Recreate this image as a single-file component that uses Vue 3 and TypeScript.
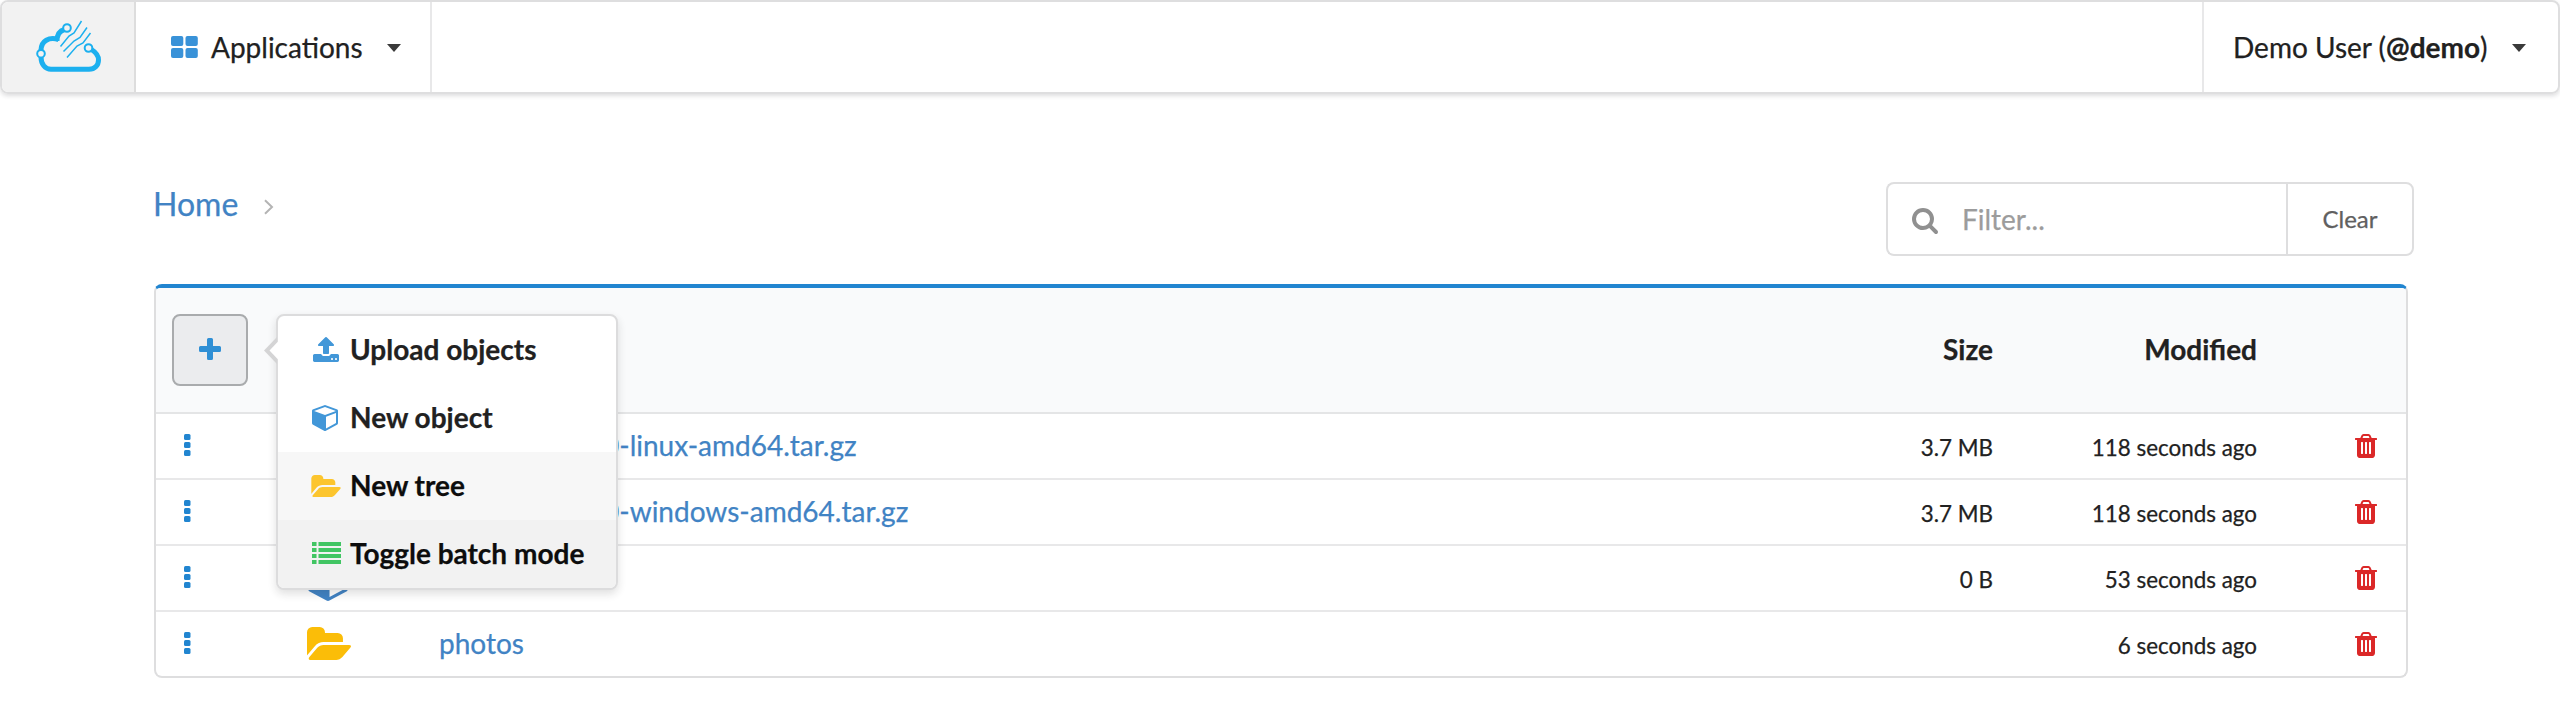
<script setup lang="ts">
interface MenuEntry {
  label: string
  icon: 'upload' | 'cube' | 'folder' | 'list'
  tone?: string
}

interface Entry {
  name: string
  kind: 'cube' | 'folder'
  size: string
  modified: string
  archive?: boolean
}

const menu: MenuEntry[] = [
  { label: 'Upload objects', icon: 'upload' },
  { label: 'New object', icon: 'cube' },
  { label: 'New tree', icon: 'folder', tone: 'hover' },
  { label: 'Toggle batch mode', icon: 'list', tone: 'active' },
]

const entries: Entry[] = [
  { name: '0-linux-amd64.tar.gz', kind: 'cube', size: '3.7 MB', modified: '118 seconds ago', archive: true },
  { name: '0-windows-amd64.tar.gz', kind: 'cube', size: '3.7 MB', modified: '118 seconds ago', archive: true },
  { name: '', kind: 'cube', size: '0 B', modified: '53 seconds ago' },
  { name: 'photos', kind: 'folder', size: '', modified: '6 seconds ago' },
]

const boxes = {
  upload: '64 64 1664 1600',
  cube: '0 128 1664 1664',
  folder: '0 128 1880 1408',
  list: '0 0 1856 1408',
}

const paths = {
  upload:
    'M1344 1472q0-26-19-45t-45-19-45 19-19 45 19 45 45 19 45-19 19-45zm256 0q0-26-19-45t-45-19-45 19-19 45 19 45 45 19 45-19 19-45zm128-224v320q0 40-28 68t-68 28h-1472q-40 0-68-28t-28-68v-320q0-40 28-68t68-28h427q21 56 70.5 92t110.5 36h256q61 0 110.5-36t70.5-92h427q40 0 68 28t28 68zm-325-648q-17 40-59 40h-256v448q0 26-19 45t-45 19h-256q-26 0-45-19t-19-45v-448h-256q-42 0-59-40-17-39 14-69l448-448q18-19 45-19t45 19l448 448q31 30 14 69z',
  cube:
    'M896 1629l640-349v-636l-640 233v752zm-64-865l698-254-698-254-698 254zm832-252v768q0 35-18 65t-49 47l-704 384q-28 16-61 16t-61-16l-704-384q-31-17-49-47t-18-65v-768q0-40 23-73t61-47l704-256q22-8 44-8t44 8l704 256q38 14 61 47t23 73z',
  folder:
    'M1879 952q0 31-31 66l-336 396q-43 51-120.5 86.5t-143.5 35.5h-1088q-34 0-60.5-13t-26.5-43q0-31 31-66l336-396q43-51 120.5-86.5t143.5-35.5h1088q34 0 60.5 13t26.5 43zm-343-344v160h-832q-94 0-197 47.5t-164 119.5l-337 396-5 6q0-4-.5-12.5t-.5-12.5v-960q0-92 66-158t158-66h320q92 0 158 66t66 158v32h544q92 0 158 66t66 158z',
  list:
    'M0 0h290v256H0zM416 0h1440v256H416zM0 384h290v256H0zM416 384h1440v256H416zM0 768h290v256H0zM416 768h1440v256H416zM0 1152h290v256H0zM416 1152h1440v256H416z',
}

const trash =
  'M704 1376v-704q0-14-9-23t-23-9h-64q-14 0-23 9t-9 23v704q0 14 9 23t23 9h64q14 0 23-9t9-23zm256 0v-704q0-14-9-23t-23-9h-64q-14 0-23 9t-9 23v704q0 14 9 23t23 9h64q14 0 23-9t9-23zm256 0v-704q0-14-9-23t-23-9h-64q-14 0-23 9t-9 23v704q0 14 9 23t23 9h64q14 0 23-9t9-23zm-544-992h448l-48-117q-7-9-17-11h-317q-10 2-17 11zm928 32v64q0 14-9 23t-23 9h-96v948q0 83-47 143.5t-113 60.5h-832q-66 0-113-58.5t-47-141.5v-952h-96q-14 0-23-9t-9-23v-64q0-14 9-23t23-9h309l70-167q15-37 54-63t79-26h320q40 0 79 26t54 63l70 167h309q14 0 23 9t9 23z'

const search =
  'M1216 832q0-185-131.5-316.5t-316.5-131.5-316.5 131.5-131.5 316.5 131.5 316.5 316.5 131.5 316.5-131.5 131.5-316.5zm512 832q0 52-38 90t-90 38q-54 0-90-38l-343-342q-179 124-399 124-143 0-273.5-55.5t-225-150-150-225-55.5-273.5 55.5-273.5 150-225 225-150 273.5-55.5 273.5 55.5 225 150 150 225 55.5 273.5q0 220-124 399l343 343q37 37 37 90z'
</script>

<template>
  <div class="page">
    <nav class="topbar">
      <a class="brand">
        <svg class="logo" viewBox="34 19 70 56" fill="none" stroke="#1cb0ef">
          <g stroke-width="5">
            <path d="M64.5 29.5C59 31 57 35 57 41" />
            <path d="M58.5 39.5C49 36.5 41.3 41 41 50" />
            <path d="M41 57C41 64 45 69.3 51 69.3H89C95 69.3 98.5 65 98.5 60C98.5 55 95.500 52 91.500 49.500" />
          </g>
          <g stroke-width="2" fill="#f2f2f2">
            <circle cx="67" cy="28" r="3.800" />
            <circle cx="88.500" cy="48" r="3.800" />
            <circle cx="41" cy="53.700" r="3.800" />
          </g>
          <g stroke-width="1.500">
            <path d="M81.500 21L74 33L69 36L60.500 46.500" />
            <path d="M87 27.500L80 37.500L74 41L63.500 51.500" />
            <path d="M90.500 33L83 43L77 46L67 57.500" />
          </g>
        </svg>
      </a>
      <a class="apps">
        <svg class="grid" viewBox="0 0 27 22" fill="#3992d8">
          <rect width="12.300" height="10" rx="2" />
          <rect x="14.500" width="12.300" height="10" rx="2" />
          <rect y="12" width="12.300" height="10" rx="2" />
          <rect x="14.500" y="12" width="12.300" height="10" rx="2" />
        </svg>
        <span>Applications</span>
        <i class="caret"></i>
      </a>
      <a class="user">
        <span>Demo User (<b>@demo</b>)</span>
        <i class="caret"></i>
      </a>
    </nav>

    <main class="content">
      <header class="tools">
        <div class="crumbs">
          <a>Home</a>
          <svg class="chevron" viewBox="0 0 10 16"><path d="M1 1.200L8 8L1 14.800" fill="none" stroke="#b4b4b4" stroke-width="2" /></svg>
        </div>
        <div class="filter">
          <div class="field">
            <svg class="search" viewBox="64 128 1664 1664"><path :d="search" /></svg>
            <span>Filter...</span>
          </div>
          <button class="clear">Clear</button>
        </div>
      </header>

      <section class="table">
        <div class="head">
          <div class="adder">
            <button class="plus">
              <svg viewBox="0 0 22 22"><path d="M9.500 0h3q1.500 0 1.500 1.500V8h6.500q1.500 0 1.500 1.500v3q0 1.500-1.500 1.500H14v6.500q0 1.500-1.500 1.500h-3Q8 22 8 20.500V14H1.500Q0 14 0 12.500v-3Q0 8 1.500 8H8V1.500Q8 0 9.500 0z" /></svg>
            </button>
            <div class="popup">
              <svg class="arrow" viewBox="0 0 28 28">
                <path d="M13 0L0 13.500L13 27z" fill="#d4d4d5" />
                <path d="M15.500 3L5.500 13.500L15.500 24L25 13.500z" fill="#fff" />
              </svg>
              <a v-for="m in menu" :key="m.label" class="item" :class="m.tone">
                <span class="slot"><svg :class="m.icon" :viewBox="boxes[m.icon]"><path :d="paths[m.icon]" /></svg></span>
                <span class="label">{{ m.label }}</span>
              </a>
            </div>
          </div>
          <div class="size">Size</div>
          <div class="modified">Modified</div>
          <div class="action"></div>
        </div>
        <div v-for="(e, i) in entries" :key="i" class="row">
          <div class="more">
            <svg viewBox="0 0 7 22"><rect width="6.500" height="6" rx="1.500" /><rect y="8" width="6.500" height="6" rx="1.500" /><rect y="16" width="6.500" height="6" rx="1.500" /></svg>
          </div>
          <div class="kind"><svg :class="e.kind" :viewBox="boxes[e.kind]"><path :d="paths[e.kind]" /></svg></div>
          <div class="name" :class="{ archive: e.archive }">{{ e.name }}</div>
          <div class="size">{{ e.size }}</div>
          <div class="modified">{{ e.modified }}</div>
          <div class="action"><svg viewBox="192 128 1408 1536"><path :d="trash" /></svg></div>
        </div>
      </section>
    </main>
  </div>
</template>

<style>
body {
  background: #fff;
}
</style>

<style scoped>
.page {
  box-sizing: border-box;
  height: 718px;
  overflow: hidden;
  font-family: Lato, "Liberation Sans", sans-serif;
  font-size: 28px;
  line-height: 34px;
  color: #212121;
  -webkit-text-stroke: 0.25px;
}
.page * {
  box-sizing: border-box;
}
svg {
  display: block;
  flex: none;
}
button {
  font: inherit;
  padding: 0;
  margin: 0;
}
.topbar {
  display: flex;
  height: 94px;
  border: 2px solid #dededf;
  border-radius: 8px;
  box-shadow: 0 2px 4px rgba(34, 36, 38, 0.15);
}
.brand,
.apps,
.user {
  display: flex;
  align-items: center;
}
.brand {
  width: 134px;
  padding-left: 32px;
  background: #f2f2f2;
  border-right: 2px solid #dddddd;
  border-radius: 6px 0 0 6px;
}
.logo {
  width: 70px;
  height: 56px;
}
.apps {
  width: 296px;
  padding-left: 35px;
  border-right: 2px solid #e8e8e9;
}
.grid {
  width: 27px;
  height: 22px;
  margin-right: 13px;
}
.caret {
  width: 0;
  height: 0;
  border: 7px solid transparent;
  border-top: 8px solid #3a3a3a;
  border-bottom: 0;
  margin: 2px 29px 0 auto;
}
.user {
  width: 356px;
  margin-left: auto;
  padding-left: 29px;
  border-left: 2px solid #e8e8e9;
}
.user .caret {
  margin-right: 32px;
}
.content {
  padding: 88px 0 0 153px;
}
.tools {
  display: flex;
  justify-content: space-between;
  width: 2261px;
  height: 102px;
}
.crumbs {
  display: flex;
  height: 44px;
  align-items: center;
  font-size: 32px;
  color: #4183c4;
}
.chevron {
  width: 10px;
  height: 16px;
  margin: 6px 0 0 26px;
}
.filter {
  display: flex;
  width: 528px;
  height: 74px;
}
.field {
  display: flex;
  flex: 1;
  align-items: center;
  padding-left: 24px;
  border: 2px solid #dededf;
  border-right: 0;
  border-radius: 8px 0 0 8px;
  color: #9c9c9c;
}
.search {
  width: 26px;
  height: 26px;
  margin: 4px 24px 0 0;
  fill: #909090;
}
.clear {
  width: 128px;
  border: 2px solid #dededf;
  border-radius: 0 8px 8px 0;
  background: #fff;
  color: #606060;
  font-size: 24px;
}
.table {
  width: 2254px;
  height: 394px;
  margin-left: 1px;
  border: 2px solid #dededf;
  border-top: 4px solid #2185d0;
  border-radius: 8px;
}
.head {
  display: flex;
  height: 126px;
  padding-top: 26px;
  background: #f9fafb;
  border-bottom: 2px solid #e4e5e6;
  border-radius: 4px 4px 0 0;
  font-weight: 700;
}
.head .size,
.head .modified {
  line-height: 71px;
}
.adder {
  position: relative;
  flex: 1;
  padding-left: 16px;
}
.plus {
  display: flex;
  align-items: center;
  justify-content: center;
  width: 76px;
  height: 72px;
  padding-right: 1px;
  border: 2px solid #a9abad;
  border-radius: 8px;
  background: #ebecee;
}
.plus svg {
  width: 22px;
  height: 22px;
  margin-bottom: 3px;
  fill: #2f8fd5;
}
.popup {
  position: absolute;
  z-index: 2;
  top: 0;
  left: 120px;
  width: 342px;
  height: 276px;
  background: #fff;
  border: 2px solid #dcdcdd;
  border-radius: 8px;
  box-shadow: 0 4px 8px rgba(34, 36, 38, 0.14);
}
.arrow {
  position: absolute;
  left: -14px;
  top: 21px;
  width: 28px;
  height: 28px;
}
.item {
  display: flex;
  align-items: center;
  height: 68px;
  padding-left: 33px;
}
.item.hover {
  background: #f7f7f7;
  color: #0d0d0d;
}
.item.active {
  background: #f2f2f2;
  border-radius: 0 0 6px 6px;
  color: #0d0d0d;
}
.label {
  padding-bottom: 2px;
}
.slot {
  display: flex;
  width: 39px;
  padding-bottom: 1px;
}
.slot svg {
  height: 26px;
  width: 26px;
  margin-left: 1px;
  fill: #4297d8;
}
.slot svg.upload {
  height: 25px;
  margin-left: 2px;
}
.slot svg.folder {
  width: 30px;
  height: 22px;
  margin-left: 0;
  fill: #fcc52e;
}
.slot svg.list {
  width: 29px;
  height: 22px;
  margin-bottom: 1px;
  fill: #41c563;
}
.row {
  display: flex;
  align-items: center;
  height: 66px;
  border-bottom: 2px solid #e8e8e9;
}
.row:last-child {
  height: 64px;
  border-bottom: 0;
}
.more {
  width: 150px;
  padding: 0 0 2px 28px;
}
.more svg {
  width: 7px;
  height: 22px;
  fill: #2185d0;
}
.kind {
  width: 133px;
}
.kind .folder {
  width: 44px;
  height: 33px;
  margin: 0 0 1px 1px;
  fill: #fbbd08;
}
.kind .cube {
  width: 40px;
  height: 40px;
  margin: 5px 0 0 2px;
  fill: #4183c4;
}
.name {
  flex: 1;
  padding-bottom: 2px;
  color: #4183c4;
}
.archive {
  padding-left: 164px;
}
.size {
  width: 200px;
  text-align: right;
}
.modified {
  width: 264px;
  text-align: right;
}
.row .size,
.row .modified {
  font-size: 22.4px;
  padding-top: 4px;
}
.action {
  width: 149px;
}
.action svg {
  width: 22px;
  height: 24px;
  margin-left: 98px;
  fill: #db2828;
}
</style>
